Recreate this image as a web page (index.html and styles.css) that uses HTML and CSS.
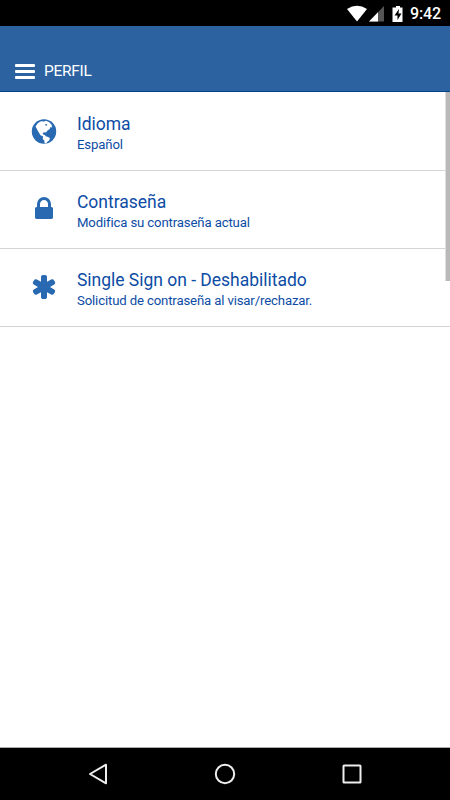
FILE: index.html
```html
<!DOCTYPE html>
<html lang="es">
<head>
<meta charset="utf-8">
<title>Perfil</title>
<link rel="stylesheet" href="styles.css">
</head>
<body>
<div class="screen">
  <div class="status">
    <svg class="status-icons" viewBox="0 0 60 18" aria-hidden="true">
      <path fill="#fff" d="M0 5Q10-1.500 20 5L10 17.500Z"/>
      <path fill="#555" d="M37 2V17.500H22Z"/>
      <path fill="#fff" d="M31 8.200V17.500H22Z"/>
      <path fill="#fff" d="M49 2h4v1.500h2.500V18h-10V3.500H49z"/>
      <path fill="#000" d="M52 5l-4.500 6.500h3V16l4-6.500h-3z"/>
    </svg>
    <span class="clock">9:42</span>
  </div>
  <header class="header">
    <div class="burger"><i></i><i></i><i></i></div>
    <h1 class="title">PERFIL</h1>
  </header>
  <main class="content">
    <section class="row">
      <svg class="icon" viewBox="0 0 28 28" aria-hidden="true">
        <circle cx="14" cy="14.500" r="12.200"/>
        <path class="land" d="M5.500 9.500L8 6 11 4.300l3 .2 2-.7 3 1.200 2.500 2.500.7 3-1.700-.5-.8 2-2.200 1.500-1.500 2-2-.2-1.300 1 .5 1.300 1.800.4.700 1.300 2.500.7 1.800 1.300-.8 2.300-2 1.500-1.200 1.500-1.400-.5-.3-2.500-1.600-1.700.4-2.300-2.600-1.300-1.500-2.500-1.500-2.500-1-2z"/>
        <path d="M15 7.500l1.500-.5.800 1-1.300.9z"/>
      </svg>
      <div><h2 class="name">Idioma</h2><p class="detail">Español</p></div>
    </section>
    <section class="row">
      <svg class="icon" viewBox="0 0 1792 1792" aria-hidden="true">
        <path d="M640 768h512v-192q0-106-75-181t-181-75-181 75-75 181v192zm832 96v576q0 40-28 68t-68 28h-960q-40 0-68-28t-28-68v-576q0-40 28-68t68-28h32v-192q0-184 132-316t316-132 316 132 132 316v192h32q40 0 68 28t28 68z"/>
      </svg>
      <div><h2 class="name">Contraseña</h2><p class="detail">Modifica su contraseña actual</p></div>
    </section>
    <section class="row">
      <svg class="icon" viewBox="0 0 1792 1792" aria-hidden="true">
        <path d="M1546 1050q46 26 59.500 77.500t-12.500 97.500l-64 110q-26 46-77.500 59.500t-97.500-12.500l-266-153v307q0 52-38 90t-90 38h-128q-52 0-90-38t-38-90v-307l-266 153q-46 26-97.500 12.500t-77.500-59.500l-64-110q-26-46-12.500-97.500t59.500-77.500l266-154-266-154q-46-26-59.500-77.500t12.500-97.500l64-110q26-46 77.500-59.500t97.500 12.500l266 153v-307q0-52 38-90t90-38h128q52 0 90 38t38 90v307l266-153q46-26 97.500-12.500t77.500 59.500l64 110q26 46 12.500 97.500t-59.500 77.500l-266 154z"/>
      </svg>
      <div><h2 class="name">Single Sign on - Deshabilitado</h2><p class="detail">Solicitud de contraseña al visar/rechazar.</p></div>
    </section>
    <div class="scrollbar"></div>
  </main>
  <nav class="navbar">
    <svg viewBox="0 0 24 24" aria-hidden="true"><path d="M20 2.700V21.300L4 12Z"/></svg>
    <svg viewBox="0 0 24 24" aria-hidden="true"><circle cx="12" cy="12" r="9.200"/></svg>
    <svg viewBox="0 0 24 24" aria-hidden="true"><rect x="3.500" y="3.500" width="17" height="17" rx=".5"/></svg>
  </nav>
</div>
</body>
</html>
```
FILE: styles.css
```css
* { box-sizing: border-box; margin: 0; padding: 0; }
body { font-family: Roboto, sans-serif; background: #fff; }
.screen { width: 450px; height: 800px; display: flex; flex-direction: column; overflow: hidden; }
.status { height: 26px; background: #000; display: flex; align-items: center; justify-content: flex-end; padding-right: 9px; gap: 3px; }
.status-icons { width: 60px; height: 18px; }
.clock { width: 31px; color: #fff; font-size: 16px; letter-spacing: -0.1px; font-weight: 500; line-height: 26px; padding-top: 1px; }
.header { height: 66px; background: #2d62a0; border-bottom: 1px solid #003f89; display: flex; align-items: center; padding: 25px 15px 0; gap: 9px; }
.burger { width: 20px; display: flex; flex-direction: column; gap: 3px; }
.burger i { height: 3px; background: #fff; border-radius: 1px; }
.title { color: #fff; font-size: 15.5px; letter-spacing: -0.3px; font-weight: 400; line-height: 20px; }
.content { flex: 1; position: relative; }
.row { height: 78px; border-bottom: 1px solid #d4d4d4; display: flex; align-items: flex-start; padding: 20px 30px 0; gap: 19px; }
.row:first-child { height: 79px; padding-top: 21px; }
.icon { width: 28px; height: 28px; margin-top: 4px; fill: #2869b2; }
.land { fill: #fff; }
.name { color: #0d4ca5; font-size: 17.5px; letter-spacing: -0.02px; font-weight: 400; line-height: 22px; }
.detail { color: #0d4ca5; font-size: 13.2px; letter-spacing: -0.15px; font-weight: 400; line-height: 20px; }
.scrollbar { position: absolute; top: 0; right: 0; width: 5px; height: 189px; background: #b9b9b9; border-left: 1px solid #dedede; }
.navbar { height: 53px; background: #000; border-top: 1px solid #aaa; display: flex; justify-content: space-between; align-items: center; padding: 0 86px; }
.navbar svg { width: 24px; height: 24px; fill: none; stroke: #eee; stroke-width: 2; stroke-linejoin: round; }
```
